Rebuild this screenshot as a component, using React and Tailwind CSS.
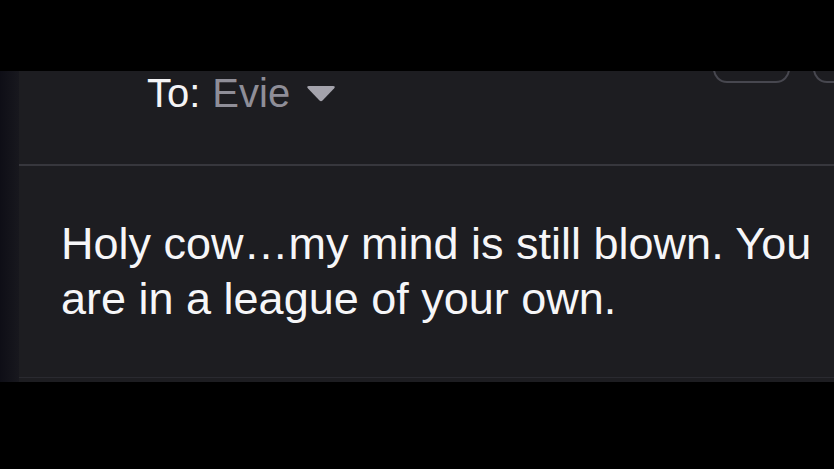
export default function App() {
  return (
    <div className="w-[834px] h-[469px] bg-black flex flex-col overflow-hidden" style={{ fontFamily: '"Liberation Sans", Arial, sans-serif' }}>
      <div className="h-[71px] shrink-0 bg-black" />
      <div className="relative h-[311px] shrink-0 flex bg-[#1d1d21] overflow-hidden">
        <div className="w-[19px] shrink-0 bg-gradient-to-r from-[#0e0e16] to-[#18181e]" />
        <div className="flex-1 flex flex-col">
          <div className="h-[95px] flex items-start pl-[128px] border-b-2 border-[#37373d]">
            <div className="flex items-center text-[40px] leading-[44px]">
              <span className="text-[#f4f4f6]">To:</span>
              <span className="text-[#8f8e98] ml-[12px]">Evie</span>
              <svg width="30" height="17" viewBox="0 0 30 17" className="ml-[16px] mt-[1px]">
                <path d="M3 1 H27 Q30 1 28 3.5 L16.5 15.5 Q15 17 13.5 15.5 L2 3.5 Q0 1 3 1 Z" fill="#a4a3ac" />
              </svg>
            </div>
          </div>
          <div className="pl-[42px] pt-[50px] text-[45px] leading-[55px] text-[#f6f6f8]">
            <p>Holy cow…my mind is still blown. You</p>
            <p>are in a league of your own.</p>
          </div>
          <div className="mt-auto h-[5px] border-t border-[#2a2a30]" />
        </div>
        <div className="absolute left-[713px] top-[-40px] w-[77px] h-[52px] rounded-[14px] border-2 border-[#47474f]" />
        <div className="absolute left-[813px] top-[-40px] w-[77px] h-[52px] rounded-[14px] border-2 border-[#47474f]" />
      </div>
      <div className="flex-1 bg-black" />
    </div>
  );
}
